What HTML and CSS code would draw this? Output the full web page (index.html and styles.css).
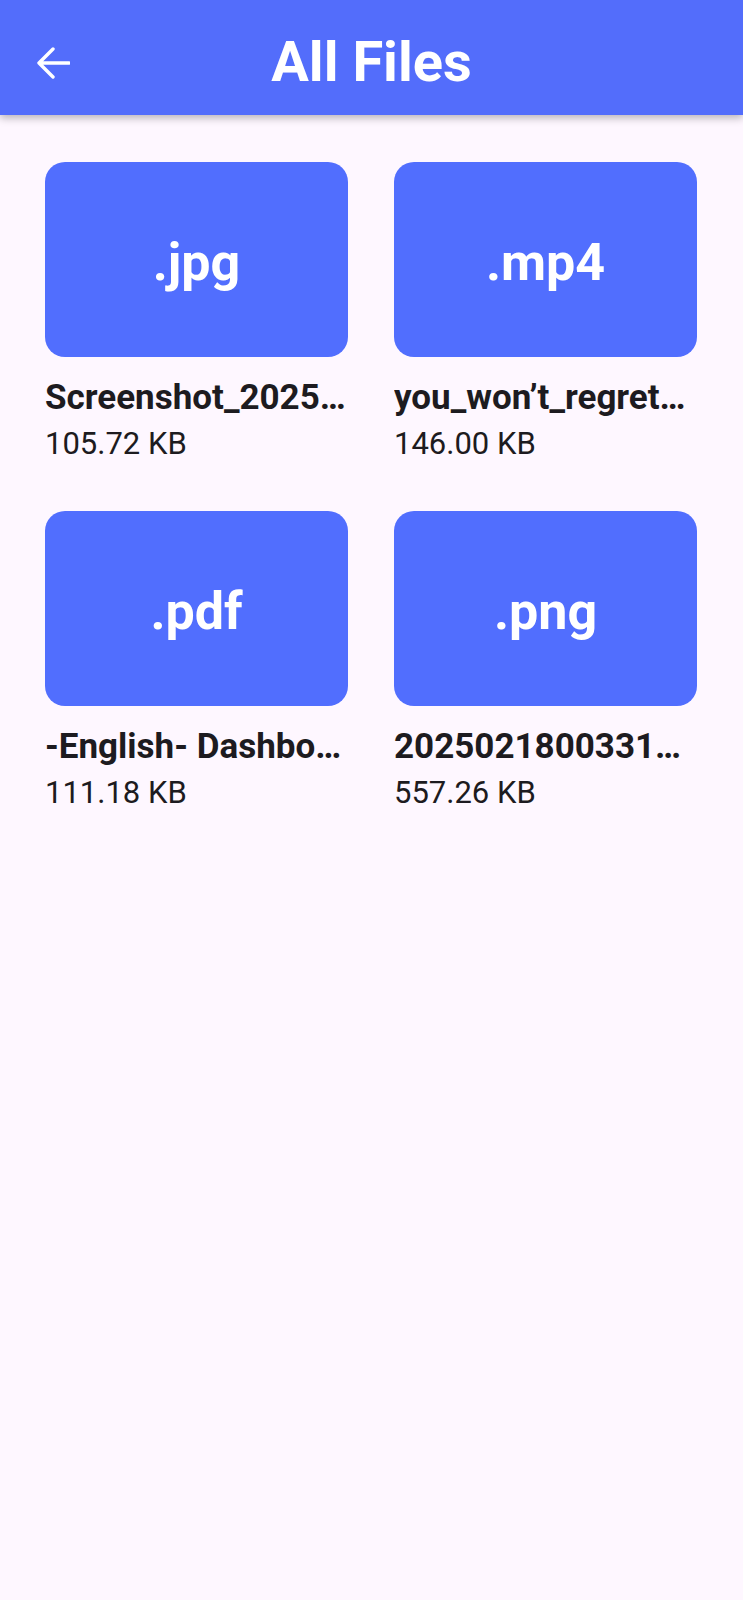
FILE: index.html
```html
<!DOCTYPE html>
<html>
<head>
<meta charset="utf-8">
<link rel="stylesheet" href="styles.css">
</head>
<body>
<header class="appbar">
  <button class="back" aria-label="Back">
    <svg width="34" height="34" viewBox="0 0 34 34"><path d="M33 17H3M17 3L3 17L17 31" fill="none" stroke="#fff" stroke-width="3.4" stroke-linecap="round" stroke-linejoin="round"/></svg>
  </button>
  <h1 class="title">All Files</h1>
</header>
<main class="grid">
  <div class="file">
    <div class="thumb">.jpg</div>
    <div class="name">Screenshot_2025…</div>
    <div class="size">105.72 KB</div>
  </div>
  <div class="file">
    <div class="thumb">.mp4</div>
    <div class="name">you_won’t_regret…</div>
    <div class="size">146.00 KB</div>
  </div>
  <div class="file">
    <div class="thumb">.pdf</div>
    <div class="name">-English- Dashbo…</div>
    <div class="size">111.18 KB</div>
  </div>
  <div class="file">
    <div class="thumb">.png</div>
    <div class="name">2025021800331…</div>
    <div class="size">557.26 KB</div>
  </div>
</main>
</body>
</html>
```
FILE: styles.css
```css
html, body {
  margin: 0;
  padding: 0;
  background: #fef7ff;
  font-family: Roboto, "Liberation Sans", sans-serif;
  color: #1d1b20;
}
body {
  min-height: 1600px;
}
.appbar {
  position: relative;
  height: 115px;
  background: #536dfb;
  display: flex;
  align-items: center;
  justify-content: center;
  box-shadow: 0 3px 8px rgba(0, 0, 0, 0.28);
}
.back {
  position: absolute;
  left: 36px;
  top: 46px;
  width: 34px;
  height: 34px;
  padding: 0;
  border: 0;
  background: none;
  display: flex;
}
.title {
  margin: 0;
  padding-top: 8px;
  color: #fff;
  font-size: 56px;
  font-weight: 700;
  line-height: 1;
}
.grid {
  display: grid;
  grid-template-columns: 303px 303px;
  column-gap: 46px;
  row-gap: 43px;
  padding: 47px 46px 0 45px;
}
.file {
  display: flex;
  flex-direction: column;
  min-width: 0;
}
.thumb {
  height: 195px;
  border-radius: 20px;
  background: #516efe;
  color: #fff;
  font-size: 52px;
  font-weight: 700;
  display: flex;
  align-items: center;
  justify-content: center;
  padding-top: 5px;
  box-sizing: border-box;
}
.name {
  margin-top: 19px;
  font-size: 35px;
  font-weight: 700;
  line-height: 44px;
  white-space: nowrap;
  overflow: hidden;
}
.size {
  font-size: 31px;
  line-height: 48px;
}
```
